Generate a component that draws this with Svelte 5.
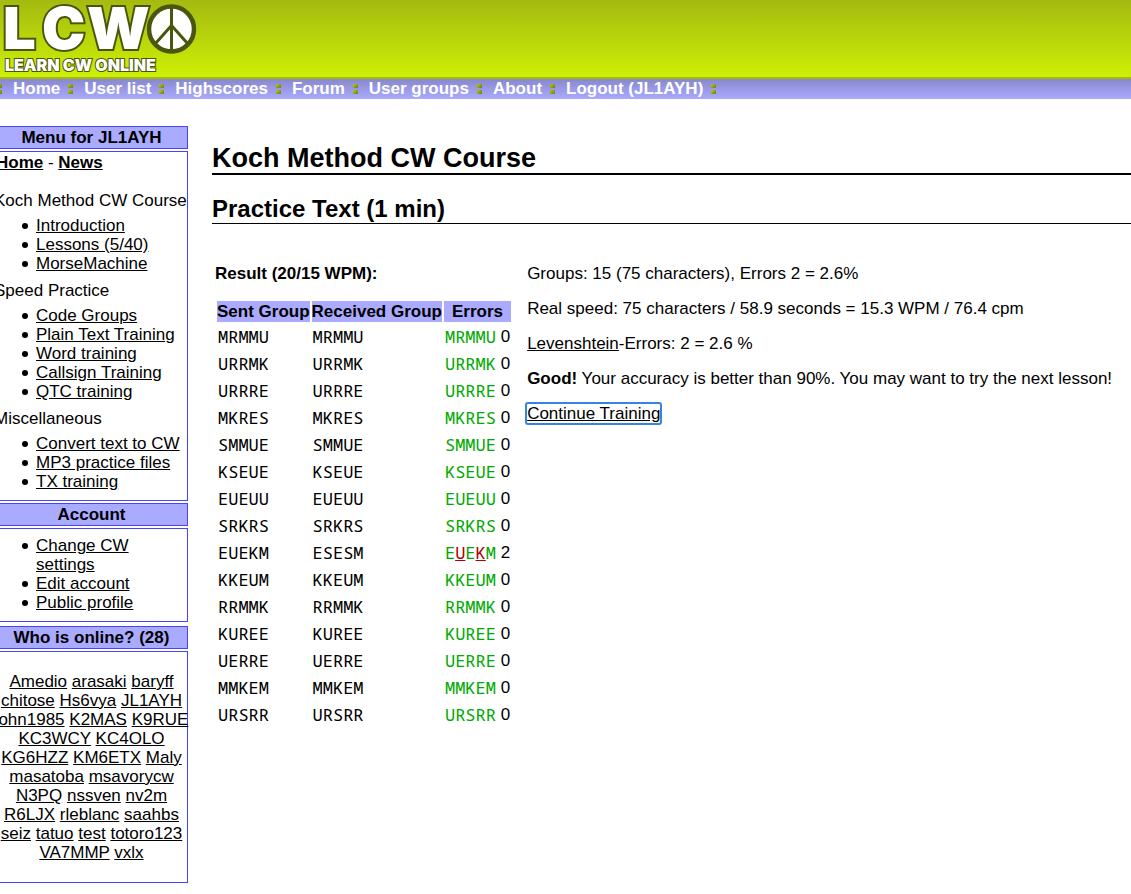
<script lang="ts">
  type Link = { label: string; href: string };
  type MenuGroup = { title: string; links: Link[] };
  type Mark = { char: string; wrong: boolean };
  type ResultRow = { sent: string; received: string; marks: Mark[]; errors: number };

  const user = "JL1AYH";

  const navLinks: Link[] = [
    { label: "Home", href: "#home" },
    { label: "User list", href: "#users" },
    { label: "Highscores", href: "#highscores" },
    { label: "Forum", href: "#forum" },
    { label: "User groups", href: "#groups" },
    { label: "About", href: "#about" },
    { label: `Logout (${user})`, href: "#logout" },
  ];

  const menuGroups: MenuGroup[] = [
    {
      title: "Koch Method CW Course",
      links: [
        { label: "Introduction", href: "#introduction" },
        { label: "Lessons (5/40)", href: "#lessons" },
        { label: "MorseMachine", href: "#morsemachine" },
      ],
    },
    {
      title: "Speed Practice",
      links: [
        { label: "Code Groups", href: "#codegroups" },
        { label: "Plain Text Training", href: "#plaintext" },
        { label: "Word training", href: "#words" },
        { label: "Callsign Training", href: "#callsigns" },
        { label: "QTC training", href: "#qtc" },
      ],
    },
    {
      title: "Miscellaneous",
      links: [
        { label: "Convert text to CW", href: "#convert" },
        { label: "MP3 practice files", href: "#mp3" },
        { label: "TX training", href: "#tx" },
      ],
    },
  ];

  const accountLinks: Link[] = [
    { label: "Change CW settings", href: "#settings" },
    { label: "Edit account", href: "#account" },
    { label: "Public profile", href: "#profile" },
  ];

  const online = [
    "Amedio", "arasaki", "baryff", "chitose", "Hs6vya", "JL1AYH", "john1985",
    "K2MAS", "K9RUE", "KC3WCY", "KC4OLO", "KG6HZZ", "KM6ETX", "Maly",
    "masatoba", "msavorycw", "N3PQ", "nssven", "nv2m", "R6LJX", "rleblanc",
    "saahbs", "seiz", "tatuo", "test", "totoro123", "VA7MMP", "vxlx",
  ];

  const groups: [string, string][] = [
    ["MRMMU", "MRMMU"],
    ["URRMK", "URRMK"],
    ["URRRE", "URRRE"],
    ["MKRES", "MKRES"],
    ["SMMUE", "SMMUE"],
    ["KSEUE", "KSEUE"],
    ["EUEUU", "EUEUU"],
    ["SRKRS", "SRKRS"],
    ["EUEKM", "ESESM"],
    ["KKEUM", "KKEUM"],
    ["RRMMK", "RRMMK"],
    ["KUREE", "KUREE"],
    ["UERRE", "UERRE"],
    ["MMKEM", "MMKEM"],
    ["URSRR", "URSRR"],
  ];

  const rows: ResultRow[] = groups.map(([sent, received]) => {
    const marks = sent.split("").map((char, i) => ({ char, wrong: char !== received[i] }));
    return { sent, received, marks, errors: marks.filter((m) => m.wrong).length };
  });
</script>

<header>
  <svg class="logo" width="204" height="77" viewBox="0 0 204 77" role="img" aria-label="LCWO">
    <g class="letters">
      <text x="3" y="49">L</text>
      <text x="42" y="49">C</text>
      <text x="87" y="49">W</text>
    </g>
    <circle cx="171.500" cy="29" r="22.500" fill="#fff" stroke="#4a560c" stroke-width="4.500" />
    <path d="M171.500 7V51M171.500 25.500L155 44M171.500 25.500L188 44" fill="none" stroke="#4a560c" stroke-width="3" />
    <text class="tagline" x="5" y="71">LEARN CW ONLINE</text>
  </svg>
</header>

<nav aria-label="Main">
  <span class="dots"></span>
  {#each navLinks as { label, href }}
    <a {href}>{label}</a>
    <span class="dots"></span>
  {/each}
</nav>

<div class="page">
  <aside>
    <h3>Menu for {user}</h3>
    <div class="box">
      <p class="shortcuts"><a href="#home">Home</a> - <a href="#news">News</a></p>
      {#each menuGroups as { title, links }}
        <p class="group-title">{title}</p>
        <ul>
          {#each links as { label, href }}
            <li><a {href}>{label}</a></li>
          {/each}
        </ul>
      {/each}
    </div>

    <h3>Account</h3>
    <div class="box">
      <ul>
        {#each accountLinks as { label, href }}
          <li><a {href}>{label}</a></li>
        {/each}
      </ul>
    </div>

    <h3 class="online-title">Who is online? ({online.length})</h3>
    <div class="box">
      <p class="online">
        {#each online as name}
          <a href="#{name}">{name}</a>{" "}
        {/each}
      </p>
    </div>
  </aside>

  <main>
    <h1>Koch Method CW Course</h1>
    <h2>Practice Text (1 min)</h2>

    <div class="columns">
      <section>
        <p class="result-title"><strong>Result (20/15 WPM):</strong></p>
        <table>
          <thead>
            <tr>
              <th>Sent Group</th>
              <th>Received Group</th>
              <th>Errors</th>
            </tr>
          </thead>
          <tbody>
            {#each rows as { sent, received, marks, errors }}
              <tr>
                <td><code>{sent}</code></td>
                <td><code>{received}</code></td>
                <td>
                  <code>{#each marks as { char, wrong }}<span class={wrong ? "wrong" : "right"}>{char}</span>{/each}</code>
                  {errors}
                </td>
              </tr>
            {/each}
          </tbody>
        </table>
      </section>

      <section class="summary">
        <p>Groups: 15 (75 characters), Errors 2 = 2.6%</p>
        <p>Real speed: 75 characters / 58.9 seconds = 15.3 WPM / 76.4 cpm</p>
        <p><a href="#levenshtein">Levenshtein</a>-Errors: 2 = 2.6 %</p>
        <p><strong>Good!</strong> Your accuracy is better than 90%. You may want to try the next lesson!</p>
        <p><a class="continue" href="#continue">Continue Training</a></p>
      </section>
    </div>
  </main>
</div>

<style>
  :global(body) {
    background: #fff;
    color: #000;
    font: 17px/19px "Liberation Sans", Arial, sans-serif;
    overflow-x: hidden;
  }

  a {
    color: inherit;
  }

  p,
  h1,
  h2,
  h3,
  ul {
    margin: 0;
  }

  header {
    height: 77px;
    background: linear-gradient(#a4ba10, #cdf005);
    border-bottom: 2px solid #a2b80e;
  }

  .logo {
    display: block;
  }

  .letters text {
    font: 900 58px Inter, "Liberation Sans", sans-serif;
    fill: #fff;
    stroke: #4a560c;
    stroke-width: 4px;
    paint-order: stroke;
  }

  .tagline {
    font: 900 16px Inter, "Liberation Sans", sans-serif;
    fill: #fff;
    stroke: #4a560c;
    stroke-width: 2px;
    paint-order: stroke;
  }

  nav {
    display: flex;
    gap: 8px;
    height: 20px;
    margin-left: -3px;
    background: linear-gradient(#8888cc, #aaaaff);
    color: #fff;
    font-weight: bold;
    white-space: nowrap;
  }

  nav a {
    text-decoration: none;
  }

  .dots {
    display: flex;
    flex: none;
    flex-direction: column;
    align-self: center;
    gap: 2px;
    width: 8px;
  }

  .dots::before,
  .dots::after {
    content: "";
    width: 5px;
    height: 4px;
    background: linear-gradient(135deg, #b4cc10, #6c7a18);
  }

  .page {
    display: flex;
    align-items: flex-start;
    gap: 24px;
    margin-left: -5px;
    padding-top: 27px;
  }

  aside {
    display: flex;
    flex-direction: column;
    flex: none;
    gap: 2px;
    width: 193px;
  }

  h3,
  .box {
    padding: 1px 0;
    border: 1px solid #4444ff;
  }

  h3 {
    background: #aaaaff;
    font-size: 17px;
    text-align: center;
  }

  .shortcuts {
    margin-bottom: 19px;
  }

  .shortcuts a {
    font-weight: bold;
  }

  .group-title {
    margin-left: -2px;
    white-space: nowrap;
  }

  ul {
    margin: 6px 0 8px;
    padding-left: 40px;
    list-style: none;
  }

  li::before {
    content: "";
    display: inline-block;
    width: 6px;
    height: 6px;
    margin: 0 8px 0 -14px;
    border-radius: 50%;
    background: #000;
    vertical-align: 2px;
  }

  .online-title {
    margin-top: 2px;
  }

  .online {
    margin: 19px -3px;
    text-align: center;
  }

  main {
    flex: 1;
    min-width: 0;
    padding-top: 17px;
  }

  h1 {
    border-bottom: 2px solid #000;
    font-size: 27px;
    line-height: 30px;
  }

  h2 {
    margin-top: 19px;
    border-bottom: 1px solid #000;
    font-size: 24px;
    line-height: 29px;
  }

  .columns {
    display: flex;
    gap: 14px;
    margin-top: 40px;
    padding-left: 3px;
  }

  .result-title {
    margin-bottom: 16px;
  }

  table {
    border-spacing: 2px;
  }

  th,
  td {
    padding: 1px;
    white-space: nowrap;
  }

  th {
    padding: 1px 0;
    background: #aaaaff;
  }

  td {
    height: 23px;
    text-align: left;
  }

  code {
    font: 17px/19px "Noto Sans Mono", "Droid Sans Mono", "DejaVu Sans Mono", monospace;
    vertical-align: -1px;
  }

  .right {
    color: #00aa00;
  }

  .wrong {
    color: #aa0000;
    text-decoration: underline;
  }

  .summary p {
    margin-bottom: 16px;
  }

  .continue {
    border-radius: 1px;
    outline: 2px solid #3584e4;
  }
</style>
